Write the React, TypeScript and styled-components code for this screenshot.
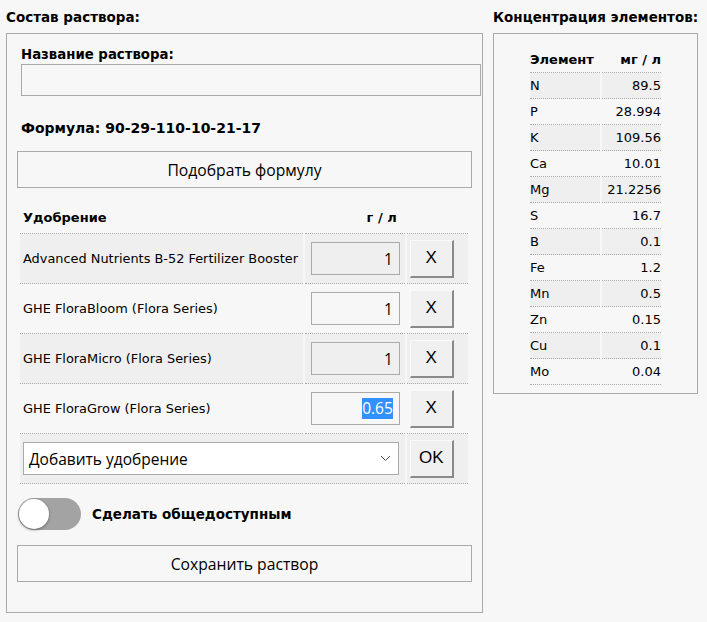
import React from "react";
import styled, { createGlobalStyle } from "styled-components";

const GlobalStyle = createGlobalStyle`
  body {
    margin: 0;
    background: #f7f7f7;
    font-family: "DejaVu Sans", "Liberation Sans", sans-serif;
    font-size: 13px;
    color: #000;
  }
`;

type Fert = { name: string; value: string; selected?: boolean };

const fertilizers: Fert[] = [
  { name: "Advanced Nutrients B-52 Fertilizer Booster", value: "1" },
  { name: "GHE FloraBloom (Flora Series)", value: "1" },
  { name: "GHE FloraMicro (Flora Series)", value: "1" },
  { name: "GHE FloraGrow (Flora Series)", value: "0.65", selected: true },
];

const elements: [string, string][] = [
  ["N", "89.5"],
  ["P", "28.994"],
  ["K", "109.56"],
  ["Ca", "10.01"],
  ["Mg", "21.2256"],
  ["S", "16.7"],
  ["B", "0.1"],
  ["Fe", "1.2"],
  ["Mn", "0.5"],
  ["Zn", "0.15"],
  ["Cu", "0.1"],
  ["Mo", "0.04"],
];

const App: React.FC = () => {
  return (
    <Page>
      <GlobalStyle />
      <LeftColumn>
        <Title>Состав раствора:</Title>
        <Panel>
          <Label>Название раствора:</Label>
          <NameInput />
          <Formula>Формула: 90-29-110-10-21-17</Formula>
          <WideButton>Подобрать формулу</WideButton>
          <FertTable>
            <thead>
              <tr>
                <HeadCell>Удобрение</HeadCell>
                <HeadCell $align="right">г / л</HeadCell>
                <HeadCell />
              </tr>
            </thead>
            <tbody>
              {fertilizers.map((f, i) => (
                <FertRow key={f.name} $odd={i % 2 === 0}>
                  <NameCell>{f.name}</NameCell>
                  <ValueCell>
                    <ValueBox>
                      {f.selected ? <Selection>{f.value}</Selection> : f.value}
                    </ValueBox>
                  </ValueCell>
                  <ButtonCell>
                    <SmallButton>X</SmallButton>
                  </ButtonCell>
                </FertRow>
              ))}
              <FertRow $odd>
                <SelectCell colSpan={2}>
                  <SelectBox>
                    <span>Добавить удобрение</span>
                    <svg width="11" height="7" viewBox="0 0 11 7">
                      <path d="M1 1l4.5 4.5L10 1" fill="none" stroke="#555" strokeWidth="1" />
                    </svg>
                  </SelectBox>
                </SelectCell>
                <ButtonCell>
                  <SmallButton>OK</SmallButton>
                </ButtonCell>
              </FertRow>
            </tbody>
          </FertTable>
          <ToggleRow>
            <Toggle>
              <Knob />
            </Toggle>
            <ToggleLabel>Сделать общедоступным</ToggleLabel>
          </ToggleRow>
          <WideButton>Сохранить раствор</WideButton>
        </Panel>
      </LeftColumn>
      <RightColumn>
        <Title>Концентрация элементов:</Title>
        <SidePanel>
          <ElemTable>
            <thead>
              <tr>
                <ElemHead>Элемент</ElemHead>
                <ElemHead $align="right">мг / л</ElemHead>
              </tr>
            </thead>
            <tbody>
              {elements.map(([el, v], i) => (
                <ElemRow key={el} $odd={i % 2 === 0}>
                  <ElemCell>{el}</ElemCell>
                  <ElemCell $align="right">{v}</ElemCell>
                </ElemRow>
              ))}
            </tbody>
          </ElemTable>
        </SidePanel>
      </RightColumn>
    </Page>
  );
};

const Page = styled.div`
  display: flex;
  gap: 10px;
  padding: 0 6px;
  align-items: flex-start;
`;

const LeftColumn = styled.div`
  width: 477px;
`;

const RightColumn = styled.div`
  width: 205px;
`;

const Title = styled.div`
  font-weight: bold;
  font-size: 13.5px;
  height: 33px;
  line-height: 35px;
  white-space: nowrap;
`;

const Panel = styled.div`
  border: 1px solid #aaa;
  padding: 12px 0 29px 10px;
  box-sizing: border-box;
  height: 580px;
`;

const Label = styled.div`
  font-weight: bold;
  font-size: 13.3px;
  padding-left: 4px;
  height: 18px;
  line-height: 18px;
`;

const NameInput = styled.div`
  margin-left: 4px;
  width: 460px;
  height: 32px;
  border: 1px solid #aaa;
  box-sizing: border-box;
`;

const Formula = styled.div`
  font-weight: bold;
  font-size: 14px;
  padding-left: 4px;
  margin-top: 22px;
  height: 18px;
  line-height: 20px;
`;

const WideButton = styled.div`
  margin-top: 15px;
  width: 455px;
  height: 37px;
  border: 1px solid #aaa;
  box-sizing: border-box;
  background: #f7f7f7;
  display: flex;
  align-items: center;
  justify-content: center;
  font-family: "Open Sans", "Noto Sans", sans-serif;
  font-size: 15.7px;
`;

const FertTable = styled.table`
  margin-top: 14px;
  margin-left: 1px;
  border-collapse: separate;
  border-spacing: 2px 0;
  width: 452px;
`;

const HeadCell = styled.th<{ $align?: string }>`
  text-align: ${(p) => p.$align || "left"};
  font-weight: bold;
  height: 31px;
  padding: 0 8px 0 3px;
  border-bottom: 1px dotted #aaa;
`;

const FertRow = styled.tr<{ $odd?: boolean }>`
  & > td {
    background: ${(p) => (p.$odd ? "#efefef" : "transparent")};
    border-bottom: 1px dotted #aaa;
    height: 49px;
    padding: 0;
  }
`;

const NameCell = styled.td`
  width: 280px;
  padding-left: 3px !important;
  white-space: nowrap;
  font-size: 12.9px;
`;

const ValueCell = styled.td`
  width: 100px;
  text-align: center;
`;

const ValueBox = styled.div`
  margin-left: 6px;
  width: 89px;
  height: 33px;
  border: 1px solid #aaa;
  box-sizing: border-box;
  display: flex;
  align-items: center;
  justify-content: flex-end;
  padding-right: 6px;
  font-family: "Open Sans", "Noto Sans", sans-serif;
  font-size: 15.5px;
  color: #000;
`;

const Selection = styled.span`
  background: #3390ff;
  color: #fff;
  line-height: 21px;
`;

const ButtonCell = styled.td`
  width: 62px;
`;

const SmallButton = styled.div`
  margin-left: 3px;
  width: 44px;
  height: 38px;
  box-sizing: border-box;
  border-right: 2px solid #8a8a8a;
  border-bottom: 2px solid #8a8a8a;
  border-top: 1px solid #fafafa;
  border-left: 1px solid #fafafa;
  background: #f0f0f0;
  display: flex;
  align-items: center;
  justify-content: center;
  font-family: "Liberation Sans", Arial, sans-serif;
  font-size: 17px;
`;

const SelectCell = styled.td`
  padding-left: 3px !important;
`;

const SelectBox = styled.div`
  width: 376px;
  height: 33px;
  border: 1px solid #aaa;
  box-sizing: border-box;
  background: #fff;
  display: flex;
  align-items: center;
  justify-content: space-between;
  padding: 0 7px 0 5px;
  font-family: "Open Sans", "Noto Sans", sans-serif;
  font-size: 15.5px;
`;

const ToggleRow = styled.div`
  display: flex;
  align-items: center;
  gap: 11px;
  margin-top: 14px;
  margin-left: 1px;
`;

const Toggle = styled.div`
  position: relative;
  width: 63px;
  height: 32px;
  border-radius: 16px;
  background: #a3a3a3;
`;

const Knob = styled.div`
  position: absolute;
  left: 1px;
  top: 1px;
  width: 30px;
  height: 30px;
  border-radius: 50%;
  background: #fff;
  box-shadow: 0 1px 3px rgba(0, 0, 0, 0.4);
`;

const ToggleLabel = styled.span`
  font-weight: bold;
  font-size: 13.5px;
`;

const SidePanel = styled.div`
  border: 1px solid #aaa;
  height: 361px;
  box-sizing: border-box;
  padding: 12px 0 0 34px;
`;

const ElemTable = styled.table`
  border-collapse: separate;
  border-spacing: 2px 0;
  width: 135px;
`;

const ElemHead = styled.th<{ $align?: string }>`
  text-align: ${(p) => p.$align || "left"};
  font-weight: bold;
  height: 26px;
  padding: 0;
  border-bottom: 1px dotted #aaa;
`;

const ElemRow = styled.tr<{ $odd?: boolean }>`
  & > td {
    background: ${(p) => (p.$odd ? "#efefef" : "transparent")};
  }
`;

const ElemCell = styled.td<{ $align?: string }>`
  text-align: ${(p) => p.$align || "left"};
  height: 25px;
  padding: 0;
  border-bottom: 1px dotted #aaa;
`;

export default App;
